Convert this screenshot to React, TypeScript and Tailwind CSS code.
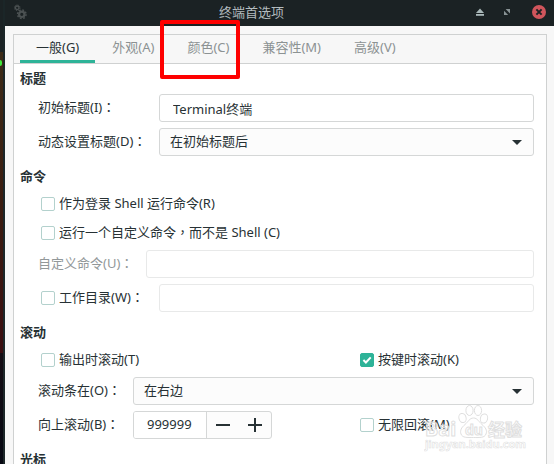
import { useState } from "react";
import type { ReactNode } from "react";

const tabs = [
  { id: "general", label: "一般(G)" },
  { id: "appearance", label: "外观(A)" },
  { id: "colors", label: "颜色(C)", marked: true },
  { id: "compat", label: "兼容性(M)" },
  { id: "advanced", label: "高级(V)" },
];

function TitleBar() {
  return (
    <header className="flex h-[26px] shrink-0 items-center bg-[#1b2224] pl-[9px] pr-2 pb-[2px]">
      <svg width="13" height="16" viewBox="0 0 13 16" fill="none" stroke="#4b5152">
        <circle cx="3.2" cy="3.8" r="1.8" strokeWidth="1.3" />
        <circle cx="3.2" cy="3.8" r="2.8" strokeWidth="1" strokeDasharray="1.2 1" />
        <circle cx="7.8" cy="10.3" r="2.7" strokeWidth="2.2" />
        <circle cx="7.8" cy="10.3" r="4.3" strokeWidth="1.4" strokeDasharray="1.8 1.58" />
      </svg>
      <h1 className="flex-1 text-center text-[13px] leading-5 text-[#b4bcbf]">终端首选项</h1>
      <div className="flex items-center">
        <button type="button" aria-label="最小化" className="mr-[19px]">
          <svg width="8" height="8" viewBox="0 0 8 8" fill="#a9b8b9">
            <path d="M4 0.6 8 5H0z" />
            <path d="M0 6h8v1.8H0z" />
          </svg>
        </button>
        <button type="button" aria-label="最大化" className="mr-[21px]">
          <svg width="8" height="8" viewBox="0 0 8 8" fill="#889294">
            <path d="M2.6 1H7v4.4z" />
            <path d="M1 2.8 5.2 7H1z" />
          </svg>
        </button>
        <button type="button" aria-label="关闭">
          <svg width="14" height="14" viewBox="0 0 14 14">
            <circle cx="7" cy="7" r="7" fill="#d0555c" />
            <path d="m4.4 4.4 5.2 5.2m0-5.2L4.4 9.6" stroke="#1b2224" strokeWidth="2" />
          </svg>
        </button>
      </div>
    </header>
  );
}

// Full-width punctuation is set centred in its cell
function Zh({ text }: { text: string }) {
  return (
    <>
      {text.split(/([：，])/).map((part, i) =>
        part === "：" || part === "，" ? (
          <span key={i} className="font-['Noto_Sans_CJK_TC',sans-serif] leading-none">{part}</span>
        ) : (
          part
        )
      )}
    </>
  );
}

function Section({ title, children }: { title: string; children?: ReactNode }) {
  return (
    <section>
      <h2 className="flex h-[30px] items-center text-[13px] font-bold">{title}</h2>
      <div className="flex flex-col gap-[6px] pl-[18px]">{children}</div>
    </section>
  );
}

function Check({ label, defaultChecked }: { label: string; defaultChecked?: boolean }) {
  return (
    <label className="flex h-[23px] items-center gap-1 whitespace-nowrap">
      <span className="relative flex">
        <input
          type="checkbox"
          defaultChecked={defaultChecked}
          className="peer size-[14px] appearance-none rounded-[2px] border border-[#b3d1cd] bg-white checked:border-[#2eb398] checked:bg-[#2eb398]"
        />
        <svg
          className="pointer-events-none absolute inset-0 hidden peer-checked:block"
          width="14"
          height="14"
          viewBox="0 0 14 14"
          fill="none"
          stroke="#fff"
          strokeWidth="2"
        >
          <path d="m3.4 7 2.5 2.5L10.7 4.4" />
        </svg>
      </span>
      <span>
        <Zh text={label} />
      </span>
    </label>
  );
}

function Select({ id, options }: { id: string; options: string[] }) {
  return (
    <div className="relative flex-1">
      <select
        id={id}
        className="block h-7 w-full appearance-none rounded-[3px] border border-[#d5d7d7] bg-[#fcfcfc] pl-[10px] pr-8"
      >
        {options.map((o) => (
          <option key={o}>{o}</option>
        ))}
      </select>
      <svg
        className="pointer-events-none absolute right-3 top-3"
        width="10"
        height="5"
        viewBox="0 0 10 5"
        fill="#273134"
      >
        <path d="M0 0h10L5 5z" />
      </svg>
    </div>
  );
}

function Watermark() {
  return (
    <svg
      className="pointer-events-none absolute right-[26px] top-[403px]"
      width="104"
      height="52"
      viewBox="0 0 104 52"
      fill="#fff"
      fillOpacity="0.5"
      stroke="#dfdfdf"
      strokeWidth="1"
      aria-hidden="true"
    >
      <ellipse cx="38.5" cy="15" rx="3.6" ry="4.6" transform="rotate(-15 38.5 15)" />
      <ellipse cx="45.5" cy="7.5" rx="3.6" ry="5" />
      <ellipse cx="54" cy="7.5" rx="3.6" ry="5" />
      <ellipse cx="60" cy="15.5" rx="3.6" ry="4.6" transform="rotate(15 60 15.5)" />
      <path d="M49.500 15c4 0 5.500 4 8.500 6.500 3.500 3 5.500 6 4 9.500-1.500 4-6 3.500-12.500 3.500s-11 .5-12.500-3.500c-1.300-3.500.5-6.500 4-9.500 3-2.500 4.500-6.500 8.500-6.500z" />
      <text x="1" y="33" fontSize="20" fontWeight="700">Bai</text>
      <text x="41" y="32" fontSize="14" fontWeight="700">du</text>
      <text x="64" y="33" fontSize="17" fontWeight="700">经验</text>
      <text x="1" y="45" fontSize="11" fontWeight="700" strokeWidth="0.6">jingyan.baidu.com</text>
    </svg>
  );
}

export default function App() {
  const [active, setActive] = useState("general");
  const [lines, setLines] = useState(999999);

  return (
    <div className="flex h-screen overflow-hidden font-['Noto_Sans','Noto_Sans_CJK_SC',sans-serif] text-[13px] text-[#273134]">
      {/* desktop showing beside the window */}
      <div className="flex w-[3px] flex-col">
        <div className="h-[52px] bg-[#1b2224]" />
        <div className="h-[301px] bg-linear-to-b from-[#3c2b18] via-[#3a1c10] to-[#3a0d10]">
          <div className="mt-2 h-[6px] w-[2px] rounded-r-full bg-[#3ee83a]" />
        </div>
        <div className="flex-1 bg-linear-to-b from-[#150d14] to-[#060812]" />
      </div>

      <div className="relative flex min-w-0 flex-1 flex-col border-l-2 border-[#1b2628] bg-[#f7f7f7]">
        <TitleBar />
        <main className="ml-2 mr-[7px] mt-2 shrink-0 border border-[#cfd1d1] bg-white">
          <nav role="tablist" className="flex h-[29px] gap-px border-b border-[#cfd1d1] bg-[#f7f7f7] pl-[6px]">
            {tabs.map((t) => (
              <button
                key={t.id}
                type="button"
                role="tab"
                aria-selected={active === t.id}
                onClick={() => setActive(t.id)}
                className={
                  active === t.id
                    ? "relative border-b-3 border-[#2eb398] px-4 text-[#273134]"
                    : "relative border-b-3 border-transparent px-4 text-[#8c9293]"
                }
              >
                {t.label}
                {t.marked && (
                  <span className="pointer-events-none absolute -left-[11px] -top-[15px] z-10 h-[59px] w-20 rounded-[2px] border-4 border-[#fe0000]" />
                )}
              </button>
            ))}
          </nav>

          <form className="flex flex-col gap-[6px] pl-[6px] pr-3">
            <Section title="标题">
              <div className="flex items-center">
                <label htmlFor="title" className="w-[121px]">
                  <Zh text="初始标题(I)：" />
                </label>
                <input
                  id="title"
                  defaultValue="Terminal终端"
                  className="h-7 min-w-0 flex-1 rounded-[3px] border border-[#d5d7d7] bg-white px-[13px]"
                />
              </div>
              <div className="flex items-center">
                <label htmlFor="dynamic" className="w-[121px]">
                  <Zh text="动态设置标题(D)：" />
                </label>
                <Select id="dynamic" options={["在初始标题后"]} />
              </div>
            </Section>

            <Section title="命令">
              <div className="pl-[3px]">
                <Check label="作为登录 Shell 运行命令(R)" />
              </div>
              <div className="pl-[3px]">
                <Check label="运行一个自定义命令，而不是 Shell (C)" />
              </div>
              <div className="flex items-center">
                <label htmlFor="command" className="w-[108px] text-[#929899]">
                  <Zh text="自定义命令(U)：" />
                </label>
                <input
                  id="command"
                  disabled
                  className="h-7 min-w-0 flex-1 rounded-[3px] border border-[#e8e9e9] bg-white px-[13px]"
                />
              </div>
              <div className="flex items-center">
                <div className="w-[121px] pl-[3px]">
                  <Check label="工作目录(W)：" />
                </div>
                <input
                  aria-label="工作目录"
                  disabled
                  className="h-7 min-w-0 flex-1 rounded-[3px] border border-[#e8e9e9] bg-white px-[13px]"
                />
              </div>
            </Section>

            <Section title="滚动">
              <div className="flex justify-between pl-[3px]">
                <Check label="输出时滚动(T)" />
                <div className="w-[174px]">
                  <Check label="按键时滚动(K)" defaultChecked />
                </div>
              </div>
              <div className="flex items-center">
                <label htmlFor="scrollbar" className="w-[95px]">
                  <Zh text="滚动条在(O)：" />
                </label>
                <Select id="scrollbar" options={["在右边"]} />
              </div>
              <div className="flex items-center">
                <label htmlFor="scrollback" className="w-[95px]">
                  <Zh text="向上滚动(B)：" />
                </label>
                <div className="flex h-7 overflow-hidden rounded-[3px] border border-[#d5d7d7] bg-[#fcfcfc]">
                  <input
                    id="scrollback"
                    value={lines}
                    onChange={(e) => setLines(Number(e.target.value) || 0)}
                    className="w-[73px] border-r border-[#d5d7d7] bg-white px-[13px]"
                  />
                  <button
                    type="button"
                    aria-label="减少"
                    onClick={() => setLines(lines - 1)}
                    className="flex w-8 items-center justify-center"
                  >
                    <svg width="14" height="14" viewBox="0 0 14 14" fill="#273134">
                      <path d="M0 6h14v2H0z" />
                    </svg>
                  </button>
                  <button
                    type="button"
                    aria-label="增加"
                    onClick={() => setLines(lines + 1)}
                    className="flex w-8 items-center justify-center"
                  >
                    <svg width="14" height="14" viewBox="0 0 14 14" fill="#273134">
                      <path d="M0 6h14v2H0zM6 0h2v14H6z" />
                    </svg>
                  </button>
                </div>
                <div className="ml-auto w-[174px]">
                  <Check label="无限回滚(M)" />
                </div>
              </div>
            </Section>

            <Section title="光标" />
          </form>
        </main>
        <Watermark />
      </div>
    </div>
  );
}
